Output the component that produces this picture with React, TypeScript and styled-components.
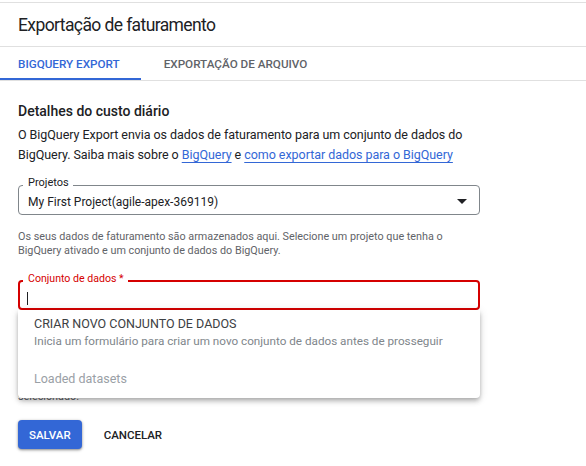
import React from "react";
import styled, { createGlobalStyle } from "styled-components";

const GlobalStyle = createGlobalStyle`
  body {
    margin: 0;
    background: #ffffff;
    font-family: Roboto, "Noto Sans", Arial, sans-serif;
    color: #202124;
  }
`;

const Page = styled.div`
  width: 586px;
  height: 466px;
  overflow: hidden;
  padding-top: 2px;
  box-sizing: border-box;
`;

const Header = styled.div`
  height: 43px;
  display: flex;
  align-items: center;
  padding-left: 18px;
  border-top: 1px solid #e0e0e0;
  border-bottom: 1px solid #e0e0e0;
  font-size: 17.5px;
  letter-spacing: -0.6px;
  color: #202124;
`;

const Tabs = styled.div`
  display: flex;
  height: 33px;
  border-bottom: 1px solid #e0e0e0;
`;

const Tab = styled.div<{ $active?: boolean }>`
  display: flex;
  align-items: center;
  padding: 0 21px 0 ${(p) => (p.$active ? "18px" : "23px")};
  font-size: 11.7px;
  font-weight: 500;
  text-transform: uppercase;
  color: ${(p) => (p.$active ? "#3367d6" : "#5f6368")};
  box-shadow: ${(p) => (p.$active ? "inset 0 -2px 0 #3367d6" : "none")};
`;

const Content = styled.div`
  padding: 0 18px;
  width: 462px;
`;

const Heading = styled.h3`
  margin: 20px 0 0;
  font-size: 14px;
  line-height: 20px;
  font-weight: 500;
  color: #202124;
`;

const Text = styled.p`
  margin: 4px 0 0;
  font-size: 12.5px;
  letter-spacing: -0.05px;
  line-height: 20px;
  color: #202124;
`;

const Link = styled.a`
  color: #3367d6;
  text-decoration: underline;
  text-underline-offset: 3px;
`;

const Field = styled.div<{ $error?: boolean; $mt: number }>`
  position: relative;
  margin-top: ${(p) => p.$mt}px;
  height: 30px;
  box-sizing: border-box;
  border: ${(p) => (p.$error ? "2px solid #d50000" : "1px solid #80868b")};
  border-radius: 4px;
  display: flex;
  align-items: center;
  padding: 0 ${(p) => (p.$error ? "7px" : "9px")};
`;

const FieldLabel = styled.span<{ $error?: boolean }>`
  position: absolute;
  left: ${(p) => (p.$error ? "3px" : "4px")};
  top: -10px;
  padding: 0 4px 0 5px;
  background: #ffffff;
  font-size: ${(p) => (p.$error ? "10.6px" : "11px")};
  line-height: 13px;
  color: ${(p) => (p.$error ? "#d50000" : "#202124")};
`;

const Value = styled.span`
  flex: 1;
  font-size: 12px;
  padding-top: 3px;
  color: #202124;
`;

const Caret = styled.span`
  width: 1px;
  height: 13px;
  margin-top: 6px;
  background: #202124;
`;

const Arrow = styled.span`
  width: 0;
  height: 0;
  margin: 3px 3px 0 0;
  border-left: 5px solid transparent;
  border-right: 5px solid transparent;
  border-top: 5px solid #202124;
`;

const Hint = styled.p<{ $mt: number }>`
  margin: ${(p) => p.$mt}px 0 0;
  font-size: 10.8px;
  line-height: 14px;
  color: #5f6368;
`;

const Menu = styled.div`
  position: absolute;
  left: -2px;
  right: -2px;
  top: calc(100% + 2px);
  height: 88px;
  background: #ffffff;
  border-radius: 0 0 4px 4px;
  box-shadow: 0 2px 4px -1px rgba(0, 0, 0, 0.2), 0 4px 5px 0 rgba(0, 0, 0, 0.14),
    0 1px 10px 0 rgba(0, 0, 0, 0.12);
  z-index: 2;
`;

const MenuItem = styled.div`
  padding: 6px 16px 8px;
`;

const MenuTitle = styled.div`
  font-size: 12.5px;
  line-height: 16px;
  color: #3c4043;
  text-transform: uppercase;
`;

const MenuSub = styled.div`
  font-size: 11.7px;
  line-height: 18px;
  color: #80868b;
`;

const MenuGroup = styled.div`
  height: 40px;
  display: flex;
  align-items: center;
  padding: 0 16px;
  font-size: 12.5px;
  color: #9aa0a6;
`;

const Actions = styled.div`
  display: flex;
  align-items: center;
  gap: 6px;
  margin-top: 16px;
`;

const Button = styled.button<{ $primary?: boolean }>`
  height: 29px;
  padding: 0 ${(p) => (p.$primary ? "11px" : "16px")};
  border: none;
  border-radius: 4px;
  font-family: Roboto, Arial, sans-serif;
  font-size: 11.5px;
  font-weight: 500;
  cursor: pointer;
  background: ${(p) => (p.$primary ? "#3367d6" : "transparent")};
  color: ${(p) => (p.$primary ? "#ffffff" : "#202124")};
  box-shadow: ${(p) =>
    p.$primary ? "0 1px 2px rgba(0,0,0,0.3), 0 1px 3px 1px rgba(0,0,0,0.15)" : "none"};
`;

const App: React.FC = () => {
  return (
    <Page>
      <GlobalStyle />
      <Header>Exportação de faturamento</Header>
      <Tabs>
        <Tab $active>BigQuery Export</Tab>
        <Tab>Exportação de arquivo</Tab>
      </Tabs>
      <Content>
        <Heading>Detalhes do custo diário</Heading>
        <Text>
          O BigQuery Export envia os dados de faturamento para um conjunto de dados do BigQuery.
          Saiba mais sobre o <Link>BigQuery</Link> e <Link>como exportar dados para o BigQuery</Link>
        </Text>

        <Field $mt={20}>
          <FieldLabel>Projetos</FieldLabel>
          <Value>My First Project(agile-apex-369119)</Value>
          <Arrow />
        </Field>
        <Hint $mt={15}>
          Os seus dados de faturamento são armazenados aqui. Selecione um projeto que tenha o
          BigQuery ativado e um conjunto de dados do BigQuery.
        </Hint>

        <Field $error $mt={22}>
          <FieldLabel $error>Conjunto de dados *</FieldLabel>
          <Caret />
          <Menu>
            <MenuItem>
              <MenuTitle>Criar novo conjunto de dados</MenuTitle>
              <MenuSub>
                Inicia um formulário para criar um novo conjunto de dados antes de prosseguir
              </MenuSub>
            </MenuItem>
            <MenuGroup>Loaded datasets</MenuGroup>
          </Menu>
        </Field>
        <Hint $mt={66}>
          Os dados de faturamento serão exportados para o conjunto de dados do BigQuery
          <br />
          selecionado.
        </Hint>

        <Actions>
          <Button $primary>SALVAR</Button>
          <Button>CANCELAR</Button>
        </Actions>
      </Content>
    </Page>
  );
};

export default App;
